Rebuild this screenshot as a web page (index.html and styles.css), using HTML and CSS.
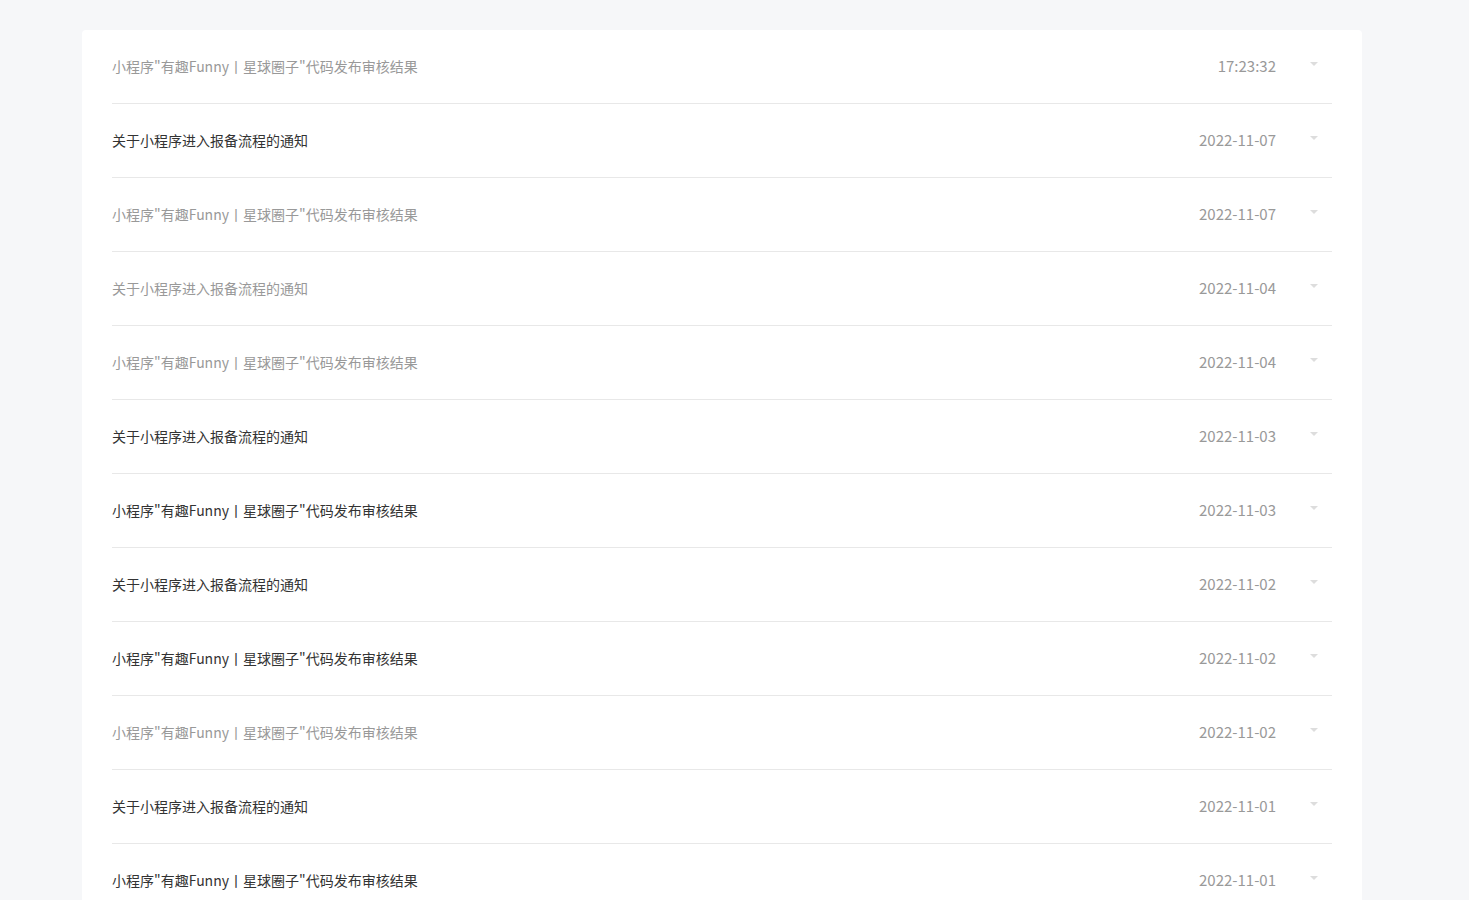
FILE: index.html
```html
<!DOCTYPE html>
<html lang="zh-CN">
<head>
<meta charset="utf-8">
<title>通知</title>
<link rel="stylesheet" href="styles.css">
</head>
<body>
<div class="card">
  <div class="row read"><div class="inner"><span class="title">小程序"有趣Funny丨星球圈子"代码发布审核结果</span><span class="date">17:23:32</span><span class="caret"></span></div></div>
  <div class="row"><div class="inner"><span class="title">关于小程序进入报备流程的通知</span><span class="date">2022-11-07</span><span class="caret"></span></div></div>
  <div class="row read"><div class="inner"><span class="title">小程序"有趣Funny丨星球圈子"代码发布审核结果</span><span class="date">2022-11-07</span><span class="caret"></span></div></div>
  <div class="row read"><div class="inner"><span class="title">关于小程序进入报备流程的通知</span><span class="date">2022-11-04</span><span class="caret"></span></div></div>
  <div class="row read"><div class="inner"><span class="title">小程序"有趣Funny丨星球圈子"代码发布审核结果</span><span class="date">2022-11-04</span><span class="caret"></span></div></div>
  <div class="row"><div class="inner"><span class="title">关于小程序进入报备流程的通知</span><span class="date">2022-11-03</span><span class="caret"></span></div></div>
  <div class="row"><div class="inner"><span class="title">小程序"有趣Funny丨星球圈子"代码发布审核结果</span><span class="date">2022-11-03</span><span class="caret"></span></div></div>
  <div class="row"><div class="inner"><span class="title">关于小程序进入报备流程的通知</span><span class="date">2022-11-02</span><span class="caret"></span></div></div>
  <div class="row"><div class="inner"><span class="title">小程序"有趣Funny丨星球圈子"代码发布审核结果</span><span class="date">2022-11-02</span><span class="caret"></span></div></div>
  <div class="row read"><div class="inner"><span class="title">小程序"有趣Funny丨星球圈子"代码发布审核结果</span><span class="date">2022-11-02</span><span class="caret"></span></div></div>
  <div class="row"><div class="inner"><span class="title">关于小程序进入报备流程的通知</span><span class="date">2022-11-01</span><span class="caret"></span></div></div>
  <div class="row"><div class="inner"><span class="title">小程序"有趣Funny丨星球圈子"代码发布审核结果</span><span class="date">2022-11-01</span><span class="caret"></span></div></div>
</div>
</body>
</html>
```

FILE: styles.css
```css
html, body {
  margin: 0;
  padding: 0;
  background: #f6f7f9;
}
body {
  font-family: "Noto Sans CJK SC", "Noto Sans", sans-serif;
  font-size: 14px;
  color: #333;
  padding-top: 30px;
}
.card {
  margin-left: 82px;
  width: 1280px;
  background: #fff;
  border-radius: 4px;
}
.row {
  padding: 0 30px;
}
.inner {
  display: flex;
  align-items: center;
  height: 71px;
  padding-bottom: 2px;
  border-bottom: 1px solid #e8e8e8;
}
.title {
  flex: 1;
  color: #333;
}
.row.read .title {
  color: #999;
}
.date {
  color: #999;
  font-size: 15px;
}
.caret {
  width: 0;
  height: 0;
  border-left: 4px solid transparent;
  border-right: 4px solid transparent;
  border-top: 4px solid #ddd;
  margin-left: 34px;
  margin-right: 14px;
  margin-top: -3px;
}
```
